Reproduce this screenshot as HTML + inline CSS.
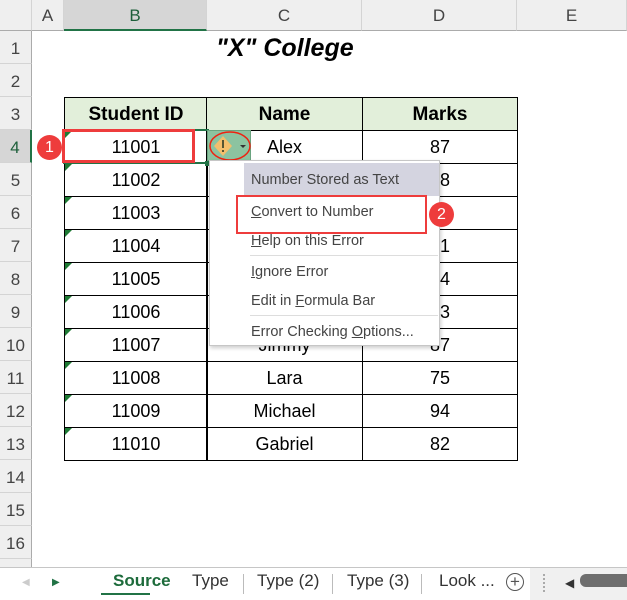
<!DOCTYPE html>
<html><head><meta charset="utf-8"><style>
*{margin:0;padding:0;box-sizing:border-box}
body{width:627px;height:600px;overflow:hidden;background:#fff;font-family:"Liberation Sans",sans-serif;position:relative}
.a{position:absolute}
.ch{position:absolute;top:0;height:31px;background:#efefef;border-bottom:1px solid #ababab;border-right:1px solid #d4d4d4;font-size:17px;color:#444;text-align:center;line-height:31px}
.rh{position:absolute;left:0;width:32px;height:33px;background:#efefef;border-bottom:1px solid #d4d4d4;border-right:1px solid #ababab;font-size:17px;color:#444;text-align:center;line-height:36px}
.c{position:absolute;height:34px;border:1.5px solid #000;font-size:18px;text-align:center;line-height:33px;color:#000}
.tri{position:absolute;left:0;top:0;width:0;height:0;border-top:7px solid #1e7a34;border-right:7px solid transparent}
.mi{position:absolute;left:251px;font-size:14.5px;color:#444}
.sep{position:absolute;left:250px;width:188px;height:1px;background:#ddd}
.tab{position:absolute;top:568px;font-size:17px;color:#333;line-height:26px}
</style></head><body>
<div class="ch" style="left:0;width:32px"></div>
<div class="ch" style="left:32px;width:32px">A</div>
<div class="ch" style="left:64px;width:143px;background:#d6d6d6;border-bottom:2px solid #217346;color:#1d5f3a">B</div>
<div class="ch" style="left:207px;width:155px">C</div>
<div class="ch" style="left:362px;width:155px">D</div>
<div class="ch" style="left:517px;width:110px">E</div>
<div class="a" style="left:0;top:559px;width:32px;height:9px;background:#efefef;border-right:1px solid #ababab"></div>
<div id="rows"></div>
<div class="a" style="left:216px;top:34px;font-size:25px;font-weight:bold;font-style:italic;color:#000">"X" College</div>
<div id="tbl"></div>
<div class="a" style="left:63px;top:129px;width:146px;height:35px;border:2px solid #217346"></div>
<div class="a" style="left:205px;top:161px;width:5px;height:5px;background:#217346"></div>
<div class="a" style="left:62px;top:129px;width:133px;height:34px;border:3px solid #ee3c3c"></div>
<div class="a" style="left:37px;top:135px;width:25px;height:25px;border-radius:50%;background:#ee3c3c;color:#fff;font-size:16px;text-align:center;line-height:25px">1</div>
<div class="a" style="left:207px;top:130px;width:44px;height:31px;background:#8cc3a0;border:1px solid #6aa37f"></div>
<svg class="a" style="left:207px;top:128px" width="60" height="75"><path d="M16 8 L25 18 L16 28 L7 18Z" fill="#f3bf6c"/><rect x="15" y="12" width="2" height="8" fill="#553"/><rect x="15" y="22" width="2" height="2" fill="#553"/><path d="M33 17 L39 17 L36 20Z" fill="#333"/><ellipse cx="23" cy="18" rx="20" ry="14" fill="none" stroke="#e21" stroke-width="1.5"/><line x1="28" y1="32" x2="28" y2="62" stroke="#e21" stroke-width="1.5"/><path d="M24 60 L32 60 L28 68Z" fill="#e21"/></svg>
<div class="a" style="left:209px;top:160px;width:231px;height:186px;background:#fff;border:1px solid #c6c6c6;box-shadow:1px 2px 4px rgba(0,0,0,.2)"></div>
<div class="a" style="left:244px;top:163px;width:195px;height:33px;background:#d4d4e0"></div>
<div class="mi" style="top:172px">Number Stored as Text</div>
<div class="mi" style="top:204px"><u>C</u>onvert to Number</div>
<div class="mi" style="top:233px"><u>H</u>elp on this Error</div>
<div class="sep" style="top:255px"></div>
<div class="mi" style="top:264px"><u>I</u>gnore Error</div>
<div class="mi" style="top:293px">Edit in <u>F</u>ormula Bar</div>
<div class="sep" style="top:315px"></div>
<div class="mi" style="top:324px">Error Checking <u>O</u>ptions...</div>
<div class="a" style="left:236px;top:195px;width:191px;height:39px;border:2.5px solid #ee3c3c"></div>
<div class="a" style="left:429px;top:202px;width:25px;height:25px;border-radius:50%;background:#ee3c3c;color:#fff;font-size:16px;text-align:center;line-height:25px">2</div>
<div class="a" style="left:0;top:567px;width:627px;height:33px;background:#fff;border-top:1px solid #c6c6c6"></div>
<div class="a" style="left:22px;top:577px;font-size:10px;color:#ccc">◀</div>
<div class="a" style="left:52px;top:577px;font-size:10px;color:#217346">▶</div>
<div class="a" style="left:101px;top:568px;width:49px;height:27px;border-bottom:2px solid #217346"></div>
<div class="tab" style="left:113px;color:#1d6b3b;font-weight:bold">Source</div>
<div class="tab" style="left:192px">Type</div>
<div class="a" style="left:243px;top:574px;width:1px;height:20px;background:#bbb"></div>
<div class="tab" style="left:257px">Type (2)</div>
<div class="a" style="left:332px;top:574px;width:1px;height:20px;background:#bbb"></div>
<div class="tab" style="left:347px">Type (3)</div>
<div class="a" style="left:421px;top:574px;width:1px;height:20px;background:#bbb"></div>
<div class="tab" style="left:439px">Look ...</div>
<div class="a" style="left:506px;top:573px;width:18px;height:18px;border:1.5px solid #555;border-radius:50%;text-align:center;line-height:15px;font-size:17px;color:#555">+</div>
<div class="a" style="left:530px;top:568px;width:97px;height:32px;background:#f0f0f0"></div>
<div class="a" style="left:543px;top:574px;width:2px;height:18px;border-left:2px dotted #aaa"></div>
<div class="a" style="left:565px;top:576px;font-size:12px;color:#333">◀</div>
<div class="a" style="left:580px;top:574px;width:47px;height:13px;background:#6e6e6e;border-radius:6px 0 0 6px"></div>
<script>
var r='';for(var i=1;i<=16;i++){r+='<div class="rh" style="top:'+(31+(i-1)*33)+'px'+(i==4?';background:#d6d6d6;border-right:2px solid #217346;color:#1d5f3a':'')+'">'+i+'</div>';}
document.getElementById('rows').innerHTML=r;
var d=[["11001","Alex","87"],["11002","","8"],["11003","",""],["11004","","1"],["11005","","4"],["11006","","3"],["11007","Jimmy","87"],["11008","Lara","75"],["11009","Michael","94"],["11010","Gabriel","82"]];
var t='';var cols=[[64,144],[206,157],[362,156]];var h=["Student ID","Name","Marks"];
for(var j=0;j<3;j++)t+='<div class="c" style="left:'+cols[j][0]+'px;top:97px;width:'+cols[j][1]+'px;background:#e2efda;font-weight:bold;font-size:19px">'+h[j]+'</div>';
for(var i=0;i<10;i++){var y=130+i*33;for(var j=0;j<3;j++){t+='<div class="c" style="left:'+cols[j][0]+'px;top:'+y+'px;width:'+cols[j][1]+'px'+(j==2?';text-align:right;padding-right:67px':'')+'">'+(j==0?'<div class="tri"></div>':'')+d[i][j]+'</div>';}}
document.getElementById('tbl').innerHTML=t;
</script>
</body></html>
